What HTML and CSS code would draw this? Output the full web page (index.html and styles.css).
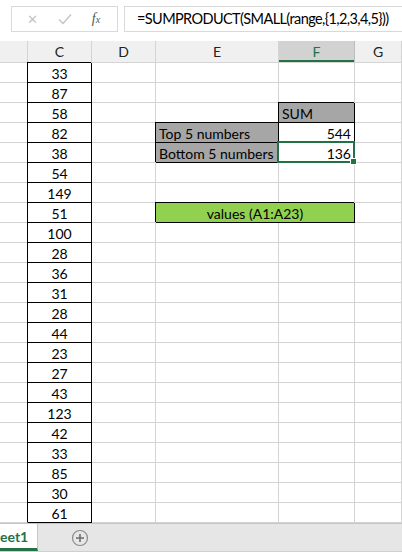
FILE: index.html
```html
<!DOCTYPE html>
<html lang="en">
<head>
  <meta charset="UTF-8" />
  <meta name="viewport" content="width=device-width, initial-scale=1.0" />
  <title>Sheet1</title>
  <link rel="stylesheet" href="styles.css">
</head>
<body>
  <div class="formula-area">
    <div class="name-tools">
      <span class="tool cancel">&#x2715;</span>
      <span class="tool enter">
        <svg width="14" height="12" viewBox="0 0 14 12"><path d="M1 6.5 L5 10.5 L13 1.5" fill="none" stroke="#c4c4c4" stroke-width="1.4"/></svg>
      </span>
      <span class="tool fx">f<sub>x</sub></span>
    </div>
    <div class="formula">=SUMPRODUCT(SMALL(range,{1,2,3,4,5}))</div>
  </div>

  <div class="headers">
    <div class="head"></div>
    <div class="head">C</div>
    <div class="head">D</div>
    <div class="head">E</div>
    <div class="head active">F</div>
    <div class="head">G</div>
  </div>

  <div class="grid" id="grid"></div>

  <div class="tabs">
    <div class="tab">eet1</div>
    <div class="add">
      <svg width="18" height="18" viewBox="0 0 18 18">
        <circle cx="9" cy="9" r="7.5" fill="none" stroke="#8a8a8a" stroke-width="1.2"/>
        <path d="M9 5 V13 M5 9 H13" stroke="#6e6e6e" stroke-width="1.6"/>
      </svg>
    </div>
  </div>

  <script>
    const values = [33, 87, 58, 82, 38, 54, 149, 51, 100, 28, 36, 31, 28, 44, 23, 27, 43, 123, 42, 33, 85, 30, 61];
    const grid = document.getElementById('grid');

    function cell(text, cls) {
      const d = document.createElement('div');
      d.className = 'cell' + (cls ? ' ' + cls : '');
      d.textContent = text || '';
      grid.appendChild(d);
      return d;
    }

    values.forEach(function (v, i) {
      const row = i + 1;
      cell('', 'edge');
      cell(v, 'box center');
      cell('');
      if (row === 3) {
        cell('');
        cell('SUM', 'box gray');
      } else if (row === 4) {
        cell('Top 5 numbers', 'box gray');
        cell('544', 'box right');
      } else if (row === 5) {
        cell('Bottom 5 numbers', 'box gray');
        cell('136', 'box right sel');
      } else if (row === 8) {
        cell('values (A1:A23)', 'box green center wide');
      } else {
        cell('');
        cell('');
      }
      cell('');
    });
  </script>
</body>
</html>
```

FILE: styles.css
```css
body {
  margin: 0;
  width: 402px;
  height: 552px;
  overflow: hidden;
  background: #fff;
  font-family: Lato, 'Open Sans', sans-serif;
  color: #000;
}
.formula-area {
  height: 41px;
  box-sizing: border-box;
  padding: 6px 0 0 11px;
  display: flex;
  gap: 6px;
  background: #fff;
}
.name-tools {
  flex-shrink: 0;
  width: 107px;
  height: 26px;
  box-sizing: border-box;
  border: 1px solid #d9d9d9;
  display: flex;
  align-items: center;
}
.tool {
  display: flex;
  align-items: center;
  justify-content: center;
}
.cancel {
  width: 36px;
  margin-left: 2px;
  color: #c4c4c4;
  font-size: 13px;
}
.enter {
  width: 30px;
}
.fx {
  width: 32px;
  font-family: 'Liberation Serif', serif;
  font-style: italic;
  font-size: 14px;
  color: #555;
}
.fx sub {
  font-size: 10px;
  vertical-align: -1px;
}
.formula {
  flex: 1;
  min-width: 0;
  height: 26px;
  box-sizing: border-box;
  border: 1px solid #d9d9d9;
  border-right: none;
  padding-left: 12px;
  font-size: 14.5px;
  letter-spacing: -0.6px;
  line-height: 24px;
  white-space: nowrap;
}
.headers, .grid {
  display: grid;
  grid-template-columns: 28px 64px 64px 123px 76px 1fr;
}
.headers {
  height: 21px;
  background: #f0f0f0;
  border-bottom: 1px solid #d4d4d4;
}
.head {
  border-right: 1px solid #d4d4d4;
  text-align: center;
  font-size: 14px;
  line-height: 21px;
  color: #222;
}
.head.active {
  background: #d2d2d2;
  color: #217346;
  box-shadow: inset 0 -2px 0 #217346;
  border-right-color: #bdbdbd;
}
.grid {
  grid-auto-rows: 20px;
}
.cell {
  position: relative;
  box-sizing: border-box;
  border-right: 1px solid #d4d4d4;
  border-bottom: 1px solid #d4d4d4;
  font-size: 14px;
  line-height: 19px;
  padding: 1px 3px 0;
  white-space: nowrap;
}
.edge {
  border-right-color: #000;
}
.box {
  border-right-color: #000;
  border-bottom-color: #000;
  box-shadow: -1px -1px 0 #000;
}
.center {
  text-align: center;
}
.right {
  text-align: right;
}
.gray {
  background: #a6a6a6;
}
.green {
  background: #92d050;
}
.wide {
  grid-column: span 2;
}
.sel::after {
  content: '';
  position: absolute;
  left: -2px;
  top: -2px;
  right: -1px;
  bottom: -1px;
  border: 2px solid #217346;
}
.sel::before {
  content: '';
  position: absolute;
  right: -3px;
  bottom: -3px;
  width: 5px;
  height: 5px;
  background: #217346;
  border: 1px solid #fff;
  z-index: 1;
}
.tabs {
  height: 30px;
  box-sizing: border-box;
  background: #e6e6e6;
  border-top: 1px solid #c6c6c6;
  border-bottom: 2px solid #cfcfcf;
  display: flex;
  align-items: stretch;
}
.tab {
  width: 38px;
  box-sizing: border-box;
  background: #fff;
  border-right: 1px solid #c6c6c6;
  border-bottom: 3px solid #217346;
  color: #217346;
  font-weight: bold;
  font-size: 14px;
  line-height: 26px;
  text-align: right;
  padding-right: 11px;
  overflow: hidden;
}
.add {
  margin-left: 33px;
  display: flex;
  align-items: center;
}
```
